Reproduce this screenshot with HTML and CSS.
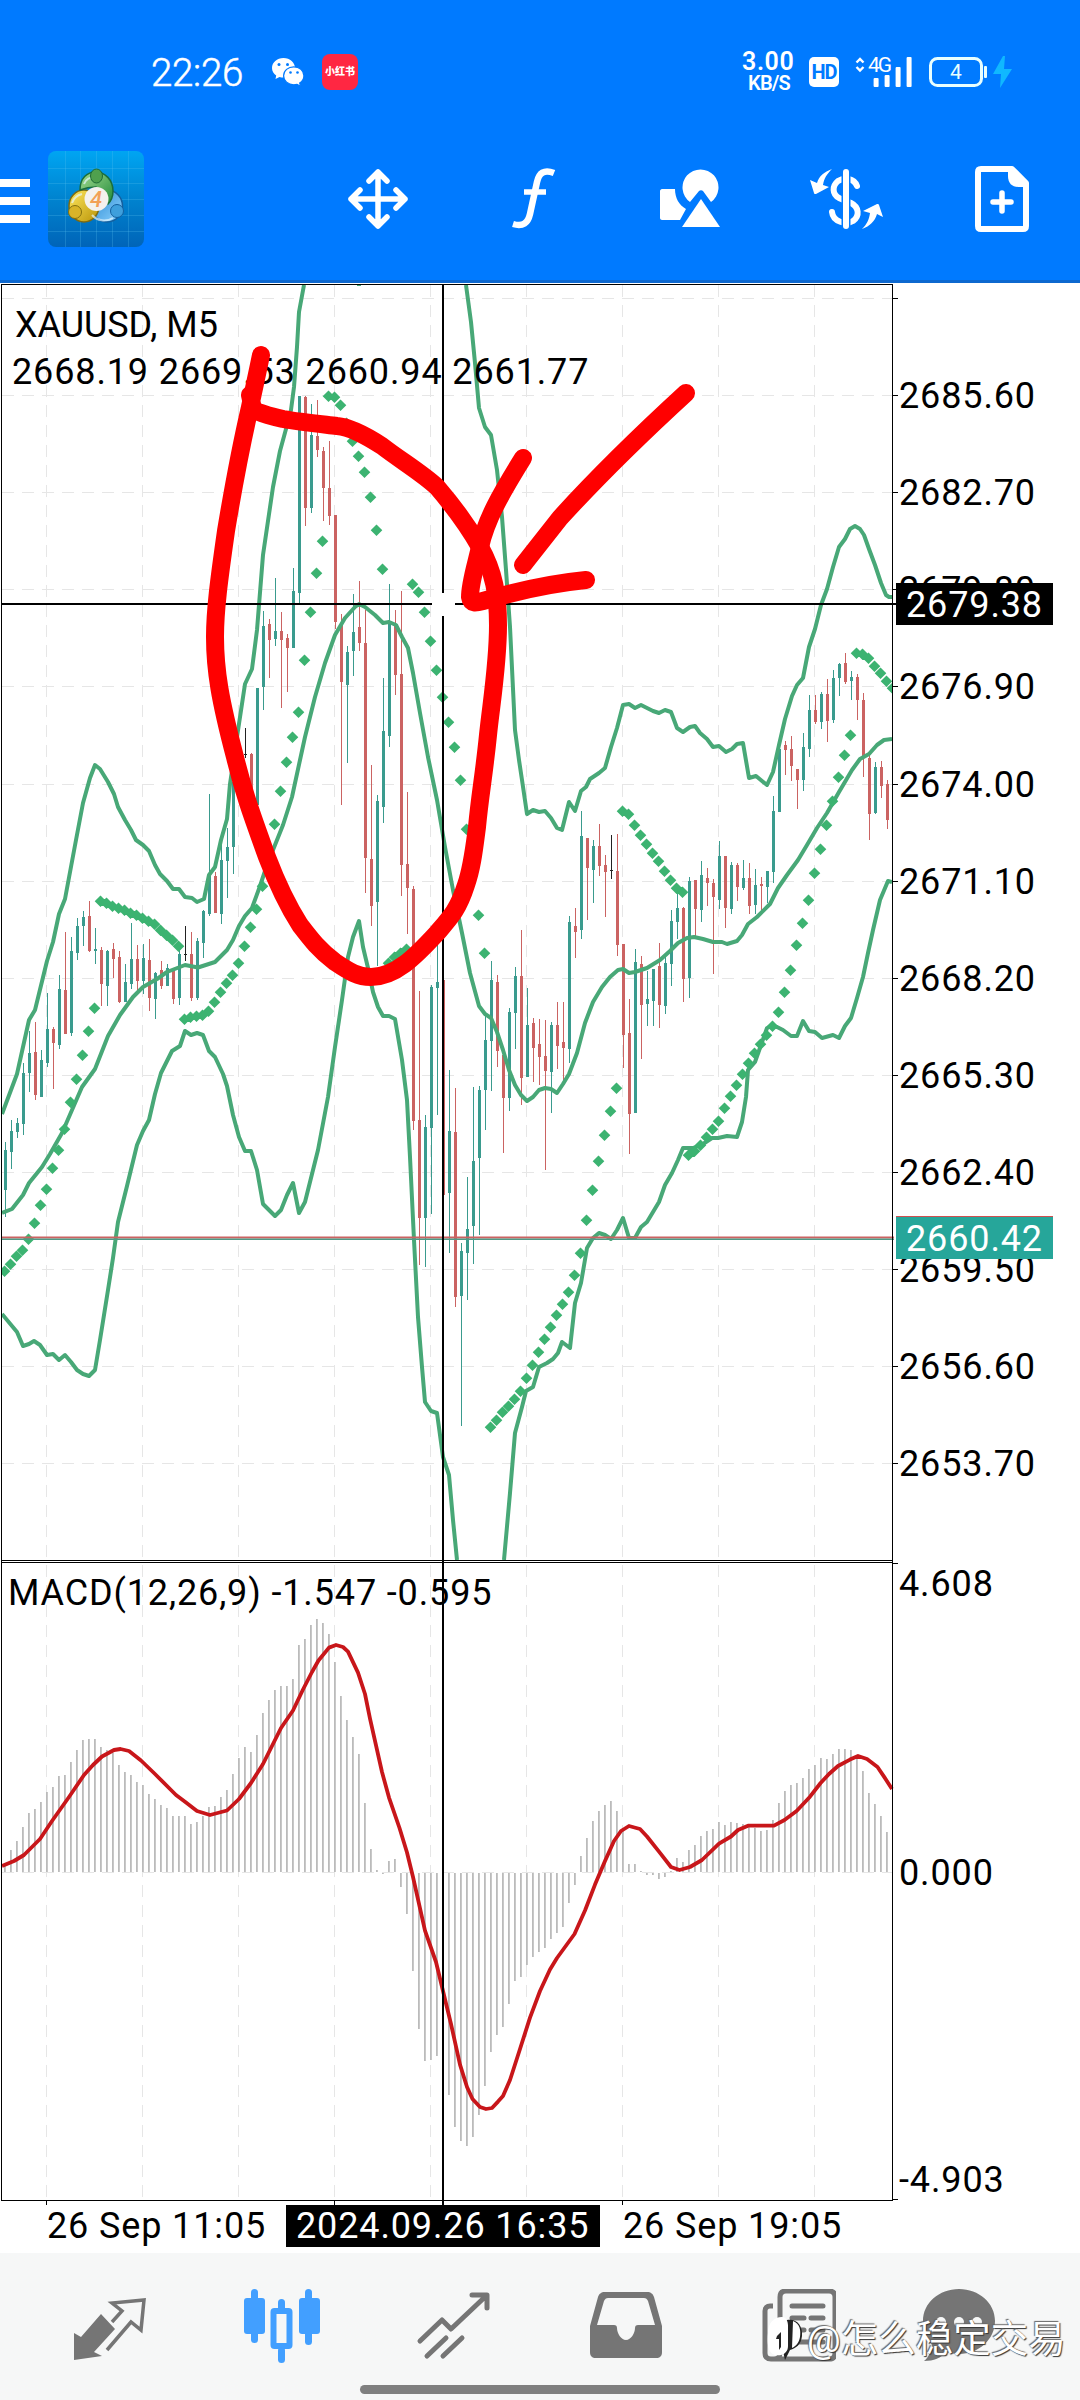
FILE: index.html
```html
<!DOCTYPE html>
<html lang="zh">
    <head>
        <meta http-equiv="content-type" content="text/html;charset=utf-8">
        <title>XAUUSD, M5</title>
        <link rel="stylesheet" href="styles.css">
    </head>
    <body>
        <header class="header">
            <!-- 状态栏 -->
            <div class="status">
                <span class="clock">22:26</span>
                <svg class="wechat" width="32" height="30" viewBox="0 0 32 30">
                    <path fill="#fff" d="M11.500 1C5 1 0 5.500 0 11c0 3.200 1.600 5.800 4.200 7.600L3.500 22l4-2c1.300.3 2.600.6 4 .6C18 20.600 23 16.300 23 11S18 1 11.500 1z"/>
                    <path fill="#fff" stroke="#007aff" stroke-width="1.200" d="M21.800 9.800c-5.700 0-10.200 4-10.200 9s4.500 9 10.200 9c1.100 0 2.300-.2 3.300-.5l3.400 1.900-.8-3.100c2.600-1.700 4.200-4.300 4.200-7.300 0-5-4.500-9-10.100-9z"/>
                    <g fill="#007aff"><circle cx="7" cy="7.500" r="1.500"/><circle cx="15.500" cy="7.500" r="1.500"/><circle cx="18.500" cy="15.500" r="1.300"/><circle cx="25.500" cy="15.500" r="1.300"/></g>
                </svg>
                <span class="red-app">小红书</span>
                <div class="status-right">
                    <div class="speed"><b>3.00</b><i>KB/S</i></div>
                    <span class="hd">HD</span>
                    <svg class="signal" width="58" height="32" viewBox="0 0 58 32">
                        <g fill="none" stroke="#fff" stroke-width="2.400"><path d="M1.500 6.500L5 3l3.500 3.500M1.500 11L5 14.500 8.500 11"/></g>
                        <text x="13" y="16" class="net">4G</text>
                        <g fill="#fff"><rect x="18.600" y="22" width="5" height="9" rx="1"/><rect x="29.600" y="19" width="5" height="12" rx="1"/><rect x="40.600" y="11" width="5" height="20" rx="1"/><rect x="51.600" y="1" width="5" height="30" rx="1"/></g>
                    </svg>
                    <svg class="battery" width="84" height="34" viewBox="0 0 84 34">
                        <rect x="1.500" y="3.500" width="51" height="27" rx="7" fill="none" stroke="#e8ffff" stroke-width="3"/>
                        <rect x="55" y="11" width="3" height="12" rx="1" fill="#e8ffff"/>
                        <text x="21" y="24" class="level">4</text>
                        <path fill="#10b8ff" d="M74 1L64 19h8l-1 14 12-19h-8l1-13z"/>
                    </svg>
                </div>
            </div>
            <!-- 工具栏 -->
            <div class="toolbar">
                <div class="menu"><div></div><div></div><div></div></div>
                <svg class="logo" width="96" height="96" viewBox="0 0 96 96">
                    <defs>
                        <linearGradient id="sky" x1="0" y1="0" x2="0" y2="1"><stop offset="0" stop-color="#00a5f2"/><stop offset=".5" stop-color="#0083cf"/><stop offset="1" stop-color="#0064b8"/></linearGradient>
                        <linearGradient id="green" x1="0" y1="0" x2="1" y2="1"><stop offset="0" stop-color="#a5dc90"/><stop offset="1" stop-color="#1f8a3a"/></linearGradient>
                        <linearGradient id="gold" x1="0" y1="0" x2="1" y2="1"><stop offset="0" stop-color="#ffe75e"/><stop offset="1" stop-color="#b99408"/></linearGradient>
                        <linearGradient id="blue" x1="0" y1="0" x2="1" y2="1"><stop offset="0" stop-color="#2384d0"/><stop offset="1" stop-color="#8fd4ff"/></linearGradient>
                    </defs>
                    <rect width="96" height="96" rx="8" fill="url(#sky)"/>
                    <path stroke="#5cc4ef" stroke-opacity=".25" d="M17.500 0v96M32.500 0v96M48.500 0v96M64.500 0v96M80.500 0v96M0 17.500h96M0 32.500h96M0 48.500h96M0 64.500h96M0 80.500h96"/>
                    <!-- 三个小人 -->
                    <ellipse cx="59" cy="55" rx="15.500" ry="16" fill="url(#blue)" stroke="#145f9e" stroke-width="1.500"/>
                    <ellipse cx="36" cy="55" rx="15" ry="16" fill="url(#gold)" stroke="#7d6b12" stroke-width="1.500"/>
                    <path fill="url(#green)" stroke="#1a6e3c" stroke-width="1.500" d="M32 39c0-12 7-18 16-18s17 8 17 19c0 6-2 10-5 13L48 36c-6 0-11 1-16 3z"/>
                    <path fill="none" stroke="#e4f6ff" stroke-opacity=".7" stroke-width="2" d="M44 64c5 6 14 7 21 3M24 52c2-6 6-8 10-9M36 33c2-5 6-7 11-7"/>
                    <ellipse cx="48.500" cy="25" rx="6" ry="7" fill="#4fa04e" stroke="#1e6b36"/>
                    <circle cx="27" cy="61" r="6.500" fill="#d8b428" stroke="#83700f"/>
                    <circle cx="69" cy="60" r="6.500" fill="#3e9fdc" stroke="#13609f"/>
                    <circle cx="48.500" cy="48" r="12" fill="#f4f1ee"/>
                    <text x="42" y="55.500" class="four">4</text>
                </svg>
                <!-- 十字 -->
                <svg class="tool t-move" width="60" height="60" viewBox="0 0 60 60" fill="none" stroke="#fff" stroke-width="5.500" stroke-linecap="round" stroke-linejoin="round">
                    <path d="M30 3v54M3 30h54M21 12l9-9 9 9M21 48l9 9 9-9M12 21l-9 9 9 9M48 21l9 9-9 9"/>
                </svg>
                <!-- 指标 -->
                <svg class="tool t-func" width="44" height="62" viewBox="0 0 44 62" fill="none" stroke="#fff" stroke-width="6.500">
                    <path d="M42 5C32 1 27 5 25 14L18 46c-2 9-7 13-17 10"/><path stroke-width="5.500" d="M12 24h22"/>
                </svg>
                <!-- 图形 -->
                <svg class="tool t-shape" width="60" height="60" viewBox="0 0 60 60" fill="#fff">
                    <path d="M2 20h13c0 9 4 16 11 20l-6 11H2c-1 0-2-1-2-2V22c0-1 1-2 2-2z"/>
                    <path d="M30 33a18 18 0 1 1 21 0L43 22c-1-1-3-1-4 0z"/>
                    <path d="M41 30l19 28H22z"/>
                </svg>
                <!-- 交易 -->
                <svg class="tool t-trade" width="74" height="62" viewBox="0 0 74 62">
                    <path fill="none" stroke="#fff" stroke-width="6" stroke-linecap="round" d="M47 18c-3-8-13-9-19-5-6 5-6 13 1 17l12 5c8 4 9 13 2 18-7 4-20 1-21-9"/>
                    <path stroke="#007aff" stroke-width="9" d="M36 3v58"/>
                    <path stroke="#fff" stroke-width="6" stroke-linecap="round" d="M36 4v54"/>
                    <path fill="#fff" d="M22 1C14 4 9 8 7 15L0 12l4 13c0 1 1 1 2 1l13-7-6-2c1-7 4-11 9-16zM52 61c8-3 13-8 15-15l6 3-4-12c0-1-1-1-2-1l-14 7 7 2c-1 7-3 11-8 16z"/>
                </svg>
                <!-- 新订单 -->
                <svg class="tool t-order" width="54" height="66" viewBox="0 0 54 66">
                    <path fill="none" stroke="#fff" stroke-width="6" stroke-linejoin="round" d="M6 3h31l14 14v43c0 2-1 3-3 3H6c-2 0-3-1-3-3V6c0-2 1-3 3-3z"/>
                    <path fill="#fff" d="M33 3h6l13 13v5h-9c-6 0-10-4-10-11z"/>
                    <path stroke="#fff" stroke-width="5.500" stroke-linecap="round" d="M27 27v18M18 36h18"/>
                </svg>
            </div>
        </header>

        <!-- 图表，坐标就是屏幕像素 -->
        <svg id="chart" class="chart" width="1080" height="1970" viewBox="0 283 1080 1970"></svg>

        <!-- 底部导航 -->
        <nav class="tabs">
            <svg class="tab" width="76" height="76" viewBox="0 0 76 76" fill="#757575">
                <path d="M2 71V44l7 4 20-23 14 15-21 23 8 4z"/>
                <path fill="none" stroke="#757575" stroke-width="3.500" d="M35 61l24-28 10 8 3-30-32 3 10 8-10 11"/>
            </svg>
            <svg class="tab" width="76" height="76" viewBox="0 0 76 76" fill="#429fff">
                <rect x="0" y="9" width="21" height="36" rx="3"/><rect x="7" y="0" width="7" height="54" rx="3.500"/>
                <rect x="55" y="9" width="21" height="36" rx="3"/><rect x="61" y="0" width="7" height="56" rx="3.500"/>
                <rect x="29.500" y="22" width="16" height="35" rx="1" fill="none" stroke="#429fff" stroke-width="6"/><rect x="34" y="10" width="7" height="12" rx="3.500"/><rect x="34" y="58" width="7" height="16" rx="3.500"/>
            </svg>
            <svg class="tab" width="76" height="76" viewBox="0 0 76 76" fill="none" stroke="#757575" stroke-width="5" stroke-linecap="round" stroke-linejoin="round">
                <path d="M4 52l22-21 9 9L70 7M56 6h15v13M11 67l19-18M27 67l19-18"/>
            </svg>
            <svg class="tab" width="76" height="76" viewBox="0 0 76 76" fill="#757575">
                <path fill-rule="evenodd" d="M17 3h42c4 0 6 2 7 5l8 29v26c0 4-2 6-6 6H8c-4 0-6-2-6-6V37l8-29c1-3 3-5 7-5zM20 9c-2 0-3 1-4 3L9 36h17c2 0 3 1 3 3 0 5 4 12 9 12s9-7 9-12c0-2 1-3 3-3h17l-7-24c-1-2-2-3-4-3z"/>
            </svg>
            <svg class="tab" width="76" height="76" viewBox="0 0 76 76" fill="none" stroke="#757575" stroke-width="5">
                <path d="M13 17h-3c-3 0-5 2-5 5v42c0 4 2 6 6 6h58c4 0 6-2 6-6V8c0-4-2-6-6-6H26c-4 0-6 2-6 6v56c0 4-3 6-6 6"/>
                <path stroke-linecap="round" d="M32 17h31M32 29h12M51 29h12M32 41h12M51 41h12M32 53h31"/>
            </svg>
            <svg class="tab chat" width="76" height="76" viewBox="0 0 76 76">
                <path fill="#757575" d="M38 0c20 0 36 14 36 32S58 65 38 65c-5 0-9-1-13-2-5 6-12 9-22 9 5-4 7-10 8-16C5 50 2 41 2 32 2 14 18 0 38 0z"/>
                <g fill="#f6f7f7"><circle cx="20" cy="33" r="5"/><circle cx="38" cy="33" r="5"/><circle cx="56" cy="33" r="5"/></g>
            </svg>
            <div class="home-bar"></div>
            <div class="mark">
                <svg width="38" height="44" viewBox="0 0 38 44">
                    <path fill="#222" d="M21 3c9-2 16 5 15 16-1 9-6 12-12 14l-5 10-2-9C9 38 4 30 7 17z"/>
                    <path fill="#fff" d="M2 16C2 6 8 0 16 0c4 0 6 4 6 9v20c0 5-3 8-7 9C7 39 0 37 2 16zM27 4c7 3 8 9 7 16-1 6-4 9-8 11z"/>
                    <path fill="#222" d="M11 19l4-4v15l-2 3V22h-3z"/>
                </svg>
                <span>@怎么稳定交易</span>
            </div>
        </nav>
        <script src="chart.js"></script>
    </body>
</html>
```
FILE: styles.css
```css
body {
    margin: 0;
    width: 1080px;
    height: 2400px;
    overflow: hidden;
    background: #fff;
    font-family: Roboto, "Noto Sans CJK SC", sans-serif;
}
/* 顶部 */
.header {
    height: 283px;
    box-sizing: border-box;
    border-bottom: 3px solid #0d68cf;
    background: #007aff;
    color: #fff;
}
.status {
    display: flex;
    align-items: center;
    height: 56px;
    padding: 44px 67px 0 151px;
}
.clock {
    width: 121px;
    font-size: 38.500px;
    font-weight: 300;
    letter-spacing: -0.3px;
    -webkit-text-stroke: 0.5px #fff;
}
.red-app {
    width: 36px;
    height: 36px;
    margin-left: 18px;
    border-radius: 8px;
    background: #ff2742;
    font-size: 10px;
    font-weight: 900;
    line-height: 35px;
    text-align: center;
    white-space: nowrap;
}
.status-right {
    display: flex;
    align-items: center;
    margin-left: auto;
}
.speed {
    width: 67px;
    display: flex;
    flex-direction: column;
}
.speed b {
    font-size: 25px;
    font-weight: 600;
    line-height: 22px;
    letter-spacing: 0.6px;
}
.speed i {
    padding-left: 6px;
    font-size: 20px;
    font-weight: 600;
    font-style: normal;
    line-height: 20px;
    letter-spacing: -0.8px;
}
.hd {
    width: 30px;
    height: 30px;
    border-radius: 5px;
    background: #fff;
    color: #007aff;
    font-size: 20px;
    font-weight: 700;
    line-height: 31px;
    text-align: center;
    letter-spacing: -1px;
}
.signal {
    margin-left: 16px;
}
.battery {
    margin-left: 16px;
}
.net {
    fill: #fff;
    font-size: 21px;
    letter-spacing: -2px;
}
.level {
    fill: #e8ffff;
    font-size: 21px;
}
/* 工具栏 */
.toolbar {
    display: flex;
    align-items: center;
    height: 98px;
    margin-top: 50px;
}
.menu {
    width: 30px;
    display: flex;
    flex-direction: column;
    gap: 10px;
    margin-top: 4px;
}
.menu div {
    height: 8px;
    background: #fff;
}
.logo {
    margin-left: 18px;
}
.four {
    fill: #f2a056;
    font-size: 22px;
    font-style: italic;
    font-weight: 500;
}
.t-move {
    margin-left: 204px;
}
.t-func {
    margin-left: 104px;
}
.t-shape {
    margin-left: 104px;
}
.t-trade {
    margin-left: 90px;
}
.t-order {
    margin-left: 91px;
}
/* 图表 */
.chart {
    display: block;
    background: #fff;
}
.label {
    font-size: 36px;
    letter-spacing: 0.87px;
    fill: #000;
}
.label.light {
    fill: #fff;
}
.label.tight {
    letter-spacing: -0.05px;
}
/* 底部 */
.tabs {
    position: relative;
    display: flex;
    gap: 96px;
    height: 147px;
    padding: 36px 0 0 72px;
    box-sizing: border-box;
    background: #f6f7f7;
}
.tab {
    flex: none;
}
.chat {
    margin-left: -11px;
}
.home-bar {
    position: absolute;
    left: 360px;
    top: 132px;
    width: 360px;
    height: 9px;
    border-radius: 5px;
    background: #7f7f7f;
}
/* 水印 */
.mark {
    position: absolute;
    left: 766px;
    top: 64px;
    display: flex;
    align-items: center;
    color: #fff;
    font-size: 37.500px;
    line-height: 44px;
    white-space: nowrap;
    text-shadow: -1px -1px 1px #666, 1px 1px 1px #333;
}
.mark span {
    margin-left: 3px;
}
```
FILE: chart.js
```js
var RIGHT = 892;
var svg = document.getElementById("chart");
var out = "";

function add(s) {
    out += s;
}
function rect(x, y, w, h, color) {
    add('<rect x="' + x + '" y="' + y + '" width="' + w + '" height="' + h + '" fill="' + color + '"/>');
}
function line(points, color, width) {
    add('<polyline points="' + points + '" fill="none" stroke="' + color + '" stroke-width="' + width + '" stroke-linejoin="round"/>');
}
function text(x, y, s, cls) {
    add('<text x="' + x + '" y="' + y + '" class="label ' + (cls || "") + '">' + s + '</text>');
}

// 每根K线: 最高, 实体上, 实体下, 最低, 颜色
var candles = [
    "1142,1150,1190,1217,G", "1120,1131,1152,1169,G", "1118,1123,1132,1138,G", "1063,1073,1124,1135,G", "1031,1053,1073,1092,G",
    "1022,1052,1095,1100,R", "1050,1060,1097,1097,G", "993,1029,1063,1067,G", "1027,1029,1043,1089,R", "975,989,1045,1049,G",
    "932,990,1034,1034,R", "937,951,1033,1036,G", "918,926,953,960,G", "911,917,926,946,G", "901,916,951,952,R",
    "928,949,951,964,G", "947,950,984,1006,R", "950,951,986,1006,G", "943,949,959,978,R", "951,957,1002,1003,R",
    "964,982,1002,1002,G", "923,959,984,989,G", "945,959,981,994,R", "944,958,981,994,G", "939,960,998,1011,R",
    "972,973,999,1019,G", "961,970,986,989,R", "964,968,986,986,G", "969,971,999,1004,R", "950,954,998,1005,G",
    "926,954,955,961,K", "932,954,998,1001,R", "938,941,998,1000,G", "910,911,943,958,G", "794,876,914,916,G",
    "872,876,913,913,R", "845,860,914,924,G", "828,847,861,898,G", "780,782,847,874,G", "755,757,783,790,G",
    "728,754,755,758,K", "753,754,790,790,R", "688,688,805,805,G", "611,626,687,710,G", "619,624,640,678,R",
    "578,631,639,646,G", "612,631,640,708,R", "634,638,648,692,R", "568,591,648,648,G", "396,396,593,603,G",
    "396,397,508,526,R", "404,435,508,513,G", "400,436,450,457,R", "447,451,488,521,R", "441,488,516,525,R",
    "515,515,622,629,R", "614,623,682,805,R", "646,652,685,763,G", "594,632,651,676,G", "581,627,643,651,R",
    "610,643,858,893,R", "765,859,906,926,R", "795,801,902,966,G", "678,731,807,823,G", "584,623,736,747,G",
    "610,624,675,695,R", "591,674,865,896,R", "792,864,888,934,R", "886,889,1121,1130,R", "991,1120,1218,1265,R",
    "1115,1127,1218,1267,G", "985,987,1128,1214,G", "945,982,988,1115,G", "978,980,1195,1195,R", "1070,1131,1193,1253,G",
    "1088,1132,1297,1307,R", "1243,1251,1296,1426,G", "1177,1229,1253,1300,G", "1087,1161,1226,1264,G", "1086,1090,1158,1235,G",
    "1015,1040,1090,1130,G", "961,980,1041,1091,G", "975,982,1051,1067,R", "1052,1055,1098,1153,R", "1008,1012,1098,1111,G",
    "967,976,1013,1049,G", "930,976,1078,1105,R", "988,1025,1077,1077,G", "1018,1023,1048,1082,R", "1019,1044,1057,1085,R",
    "1020,1056,1071,1170,R", "1022,1025,1072,1113,G", "1002,1025,1046,1069,R", "1002,1042,1048,1080,R", "916,922,1049,1063,G",
    "908,926,932,958,R", "811,836,930,939,G", "838,838,868,920,R", "840,846,870,903,G", "824,846,866,876,R",
    "855,865,872,917,R", "835,870,871,879,K", "834,871,945,956,R", "944,944,1035,1068,R", "999,1033,1114,1154,R",
    "949,962,1113,1113,G", "956,964,1005,1059,R", "971,999,1004,1026,G", "969,969,1001,1026,G", "943,966,1005,1028,R",
    "957,963,1006,1014,G", "910,921,964,986,G", "893,908,922,939,G", "907,908,979,1002,R", "877,881,978,998,G",
    "880,880,909,937,R", "861,875,910,922,G", "868,878,883,906,R", "879,883,897,974,R", "841,856,900,909,G",
    "856,856,908,928,R", "862,865,909,914,G", "863,865,887,901,R", "860,878,888,890,G", "863,878,906,914,R",
    "869,885,905,914,G", "877,884,886,910,R", "871,871,887,903,G", "796,811,872,883,G", "748,749,812,812,G",
    "741,745,750,775,R", "736,749,766,781,R", "769,769,780,809,R", "733,747,780,791,G", "695,710,749,757,G",
    "695,710,722,724,R", "692,694,722,729,G", "679,694,721,742,R", "670,678,720,723,G", "663,664,678,696,G",
    "653,663,682,684,R", "671,677,681,700,G", "674,677,700,720,R", "693,700,757,777,R", "753,758,814,840,R",
    "762,767,813,814,G", "761,767,786,798,R", "780,784,820,829,R"
];

// 抛物线 SAR
var sar = [
    1271, 1264, 1256, 1250, 1239, 1223, 1205, 1189, 1168, 1150, 1129, 1102, 1079, 1055, 1031, 1008,
    901, 903, 906, 908, 910, 913, 915, 918, 921, 924, 930, 935, 940, 946,
    1019, 1017, 1016, 1015, 1011, 1002, 992, 983, 975, 963, 946, 927, 909, 886, 860, 824, 791, 762, 737, 712, 660, 612, 573, 541,
    396, 397, 405, 423, 441, 456, 472, 497, 530, 569,
    963, 957, 953, 949,
    584, 592, 612, 641, 670, 697, 722, 747, 780, 829, 872, 915, 953,
    1427, 1420, 1412, 1406, 1399, 1391, 1378, 1365, 1352, 1339, 1327, 1315, 1304, 1292, 1275, 1253, 1220, 1190, 1161, 1135, 1111, 1088,
    811, 814, 825, 835, 844, 853, 861, 871, 880, 888, 892,
    1155, 1151, 1145, 1137, 1129, 1121, 1108, 1096, 1085, 1074, 1063, 1053, 1044, 1035, 1026, 1012, 992, 970, 945, 923, 900, 873, 849, 825, 801, 777, 755, 735,
    653, 654, 658, 666, 673, 681, 688
];

// 布林带
var upper1 = "2,1114 17,1074 29,1020 35,1010 47,961 53,942 59,914 65,899 76,840 83,803 90,778 95,765 100,769 108,782 114,794 118,807 125,820 131,830 136,840 143,845 149,851 155,865 160,874 167,881 173,889 179,889 185,897 192,898 197,902 204,899 209,875 215,867 221,840 227,819 230,784 237,737 245,684 252,669 257,630 263,555 273,487 280,451 286,429 291,410 294,387 297,347 299,312 304,285";
var upper2 = "466,285 471,322 475,363 479,408 485,427 491,435 497,470 502,517 506,570 510,627 515,730 519,760 522,780 527,814 533,810 539,812 545,811 551,818 557,828 562,830 569,802 575,811 581,791 586,787 590,779 599,773 605,768 611,747 617,728 623,705 629,704 635,708 641,705 647,708 653,711 659,713 665,710 671,712 677,728 683,732 690,727 695,726 700,733 707,739 713,747 719,746 726,752 732,749 737,744 743,743 749,778 756,776 762,781 767,785 773,772 779,745 785,719 792,696 797,685 803,678 809,647 815,629 821,605 827,589 833,567 839,547 845,539 850,529 855,526 860,529 864,535 869,549 875,565 881,583 886,595 889,597 892,597";
var middle = "2,1213 12,1209 23,1195 29,1183 42,1167 50,1154 62,1133 72,1110 82,1087 95,1069 108,1036 120,1015 133,997 143,987 157,979 167,972 185,965 198,967.5 215,962 227,950 233,940 239,926 245,916 252,908 260,886 267,865 275,845 283,825 292,797 300,760 305,737 315,697 325,663 335,635 345,618 355,607 359,604 365,607 375,615 383,623 389,622 396,625 402,637 408,648 413,673 420,713 428,757 437,800 445,847 453,890 462,933 470,973 479,1006 485,1014 491,1018 497,1032 503,1050 509,1070 515,1085 521,1095 527,1101 533,1097 539,1090 545,1088 551,1089 557,1093 563,1084 569,1074 577,1053 585,1023 593,1002 602,987 610,977 618,970 623,969 629,973 635,972 647,968 660,960 670,951 678,943 687,938 694,937 703,939 713,942 722,942 727,944 737,941 742,935 748,924 757,917 770,904 778,888 787,875 798,860 807,845 817,828 827,813 839,792 852,770 860,759 869,754 877,745 884,740 892,739";
var lower1 = "2,1314 17,1332 23,1346 29,1344 34,1341 40,1345 47,1355 53,1354 59,1360 65,1355 71,1362 77,1370 83,1374 89,1376 95,1370 100,1340 108,1290 113,1258 118,1222 127,1186 137,1145 143,1131 149,1120 155,1094 161,1073 167,1061 172,1051 180,1046 185,1031 191,1035 197,1033 203,1035 209,1051 215,1057 223,1074 227,1086 233,1115 239,1137 245,1151 251,1151 257,1170 263,1204 275,1216 281,1210 287,1195 293,1183 299,1213 305,1202 318,1150 328,1097 335,1047 342,1000 348,957 353,937 359,921 363,947 368,968 373,992 378,1007 383,1016 389,1016 395,1019 402,1060 407,1100 410,1157 414,1240 418,1317 422,1367 425,1402 431,1411 437,1413 443,1457 449,1475 453,1520 457,1560";
var lower2 = "504,1560 510,1493 515,1433 522,1407 526,1391 533,1387 539,1367 547,1363 553,1359 558,1353 562,1342 570,1348 575,1303 581,1283 587,1248 593,1238 599,1233 605,1235 611,1239 617,1230 623,1218 629,1238 635,1238 641,1227 647,1222 659,1202 665,1185 672,1173 678,1160 683,1148 693,1148 703,1144 712,1138 718,1138 727,1136 737,1137 742,1122 746,1097 748,1070 755,1062 767,1028 772,1026 777,1027 783,1030 791,1036 797,1036 803,1021 809,1031 815,1032 822,1038 833,1035 839,1038 845,1026 851,1018 857,998 863,977 868,953 873,930 880,900 888,881 892,882";

// MACD 柱和信号线
var macd = [
    6, 22, 31, 45, 59, 63, 70, 80, 85, 96, 97, 110, 122, 132, 133, 133, 125, 122, 119, 107, 100, 97, 90, 87, 78, 73, 67, 64, 56, 56,
    56, 48, 50, 56, 65, 66, 75, 82, 98, 114, 125, 120, 137, 159, 172, 182, 186, 186, 193, 227, 233, 247, 253, 249, 238, 210, 176, 152, 135, 118,
    69, 23, 2, -1, 11, 13, -14, -41, -98, -156, -188, -187, -183, -204, -222, -254, -268, -273, -264, -242, -213, -179, -162, -154, -131, -108, -104, -92, -84, -79,
    -75, -66, -60, -54, -30, -12, 16, 34, 51, 61, 67, 71, 61, 44, 8, 8, 1, -2, -2, -6, -4, 1, 14, 10, 22, 27, 36, 41, 43, 50,
    47, 50, 49, 48, 47, 44, 41, 42, 52, 69, 81, 87, 89, 94, 103, 107, 114, 113, 118, 123, 123, 122, 114, 101, 79, 68, 56, 40
];
var signal = "2,1866 14,1861 24,1855 40,1839 52,1821 69,1797 84,1775 93,1765 102,1756.5 114,1750 120.5,1749 129,1751 141,1760.5 155,1774 176,1795 186,1802.5 197,1811 210,1815 227,1810.5 239,1799 251,1783 263,1764 272,1746 281,1728 293,1710.5 303,1689.5 312,1672 318.5,1660.5 329,1647.6 336,1645 343,1647 348,1651.6 358,1672.6 365,1694 370,1718.6 382,1772 389,1797.6 399.5,1828 407,1852.5 413,1877 425,1930.6 436,1962 443,1991 451,2024 460,2064.6 467,2087 472.5,2099 480,2107 486,2109 492,2108 498,2101.6 503,2096 510,2080 520,2049 530,2017.7 540,1991 550,1969.5 557,1958 574.5,1934 585,1910.5 595,1884.6 605,1861 614,1841 621,1831 629,1826 640,1829 647,1836.5 659,1851.6 671,1867 679.5,1870 690,1867 702,1860 719,1843.6 731,1836.5 738,1830 748,1825.7 774,1825.7 784.5,1820 796.6,1811 810,1796.7 820.6,1783 829,1774 838,1766 850,1759.6 858,1756 867,1759 877.5,1767 884,1776.6 892,1789";

var colors = { G: "#3a9b8e", R: "#cb6362", K: "#222" };
var gridY = [298, 395, 492, 589, 686, 784, 881, 978, 1075, 1172, 1269, 1366, 1463];
var prices = ["", "2685.60", "2682.70", "2679.80", "2676.90", "2674.00", "2671.10", "2668.20", "2665.30", "2662.40", "2659.50", "2656.60", "2653.70"];
var i;

add('<clipPath id="plot"><rect x="2" y="285" width="890" height="1275"/></clipPath>');

// 网格
var grid = "";
for (i = 0; i < 9; i++) {
    grid += "M" + (46.5 + i * 96) + " 285V2200";
}
for (i = 0; i < gridY.length; i++) {
    grid += "M2 " + (gridY[i] + 0.5) + "H" + RIGHT;
}
grid += "M2 1872.5H" + RIGHT;
add('<path d="' + grid + '" fill="none" stroke="#e6e6e6" stroke-dasharray="12 8"/>');

// K线
for (i = 0; i < candles.length; i++) {
    var c = candles[i].split(",");
    var x = 4 + i * 6;
    rect(x + 1, c[0], 1, c[3] - c[0], colors[c[4]]);
    rect(x, c[1], 3, Math.max(c[2] - c[1], 1), colors[c[4]]);
}

// 指标
add('<g clip-path="url(#plot)">');
[upper1, upper2, middle, lower1, lower2].forEach(function (b) {
    line(b, "#48a877", 4);
});
rect(357, 285, 4, 1, "#48a877");
var dots = "";
for (i = 0; i < sar.length; i++) {
    dots += "M" + (4.5 + i * 6) + " " + (sar[i] - 5.5) + "l5.800 5.800l-5.800 5.800l-5.800 -5.800z";
}
add('<path d="' + dots + '" fill="#3cb371"/></g>');

// 现价线
rect(2, 1236.5, 892, 2, "#cb6362");
rect(2, 1238.5, 892, 1.5, "#4f9a86");

// MACD
for (i = 0; i < macd.length; i++) {
    rect(4 + i * 6, macd[i] > 0 ? 1872 - macd[i] : 1873, 1.8, Math.abs(macd[i]), "#bbb");
}
line(signal, "#c8161a", 3.8);

// 文字
text(15, 337, "XAUUSD, M5", "tight");
text(12, 383.5, "2668.19 2669.53 2660.94 2661.77");
text(8, 1605, "MACD(12,26,9) -1.547 -0.595");
for (i = 0; i < gridY.length; i++) {
    rect(RIGHT, gridY[i], 6, 1, "#000");
    text(899, gridY[i] + 13, prices[i]);
}
text(899, 1596, "4.608");
text(899, 1885, "0.000");
text(899, 2192, "-4.903");
text(47, 2238, "26 Sep 11:05");
text(623, 2238, "26 Sep 19:05");
rect(286, 2205, 314, 42, "#000");
text(296, 2238, "2024.09.26 16:35", "light");

// 边框和刻度
rect(1, 284, 1, 1916, "#000");
rect(RIGHT, 284, 1, 1917, "#000");
rect(1, 284, 892, 1, "#000");
rect(1, 1560, 892, 1, "#000");
rect(1, 1562, 892, 1, "#000");
rect(1, 2200, 892, 1, "#000");
rect(RIGHT, 1563, 6, 1, "#000");
rect(RIGHT, 2199, 6, 1, "#000");
rect(46, 2200, 1, 5, "#000");
rect(334, 2200, 1, 5, "#000");
rect(622, 2200, 1, 5, "#000");

// 十字光标
rect(2, 603, 430, 2, "#000");
rect(455, 603, 441, 2, "#000");
rect(442, 285, 2, 308, "#000");
rect(442, 616, 2, 1589, "#000");
rect(896, 583, 157, 42, "#000");
text(906, 616.5, "2679.38", "light");
rect(896, 1216, 157, 43, "#26a69a");
rect(896, 1216, 157, 1, "#d05050");
text(906, 1250.5, "2660.42", "light");

// 手绘标记
add('<g fill="none" stroke="#f00" stroke-width="18" stroke-linecap="round" stroke-linejoin="round">');
add('<path d="M261 355C258 370 254 388 250 407C240 450 232 495 226 531C219 580 215 610 215 637C215 670 220 700 235 757C243 790 250 810 267 857C275 878 284 900 300 925C310 938 318 949 335 962C350 972 358 977 371 977C395 977 415 957 437 933C450 918 458 910 466 885C472 868 474 850 477 827C480 795 484 775 488 735C491 705 498 665 498 625C498 595 494 572 480 547C472 533 455 508 437 487C422 473 400 460 382 446C365 435 350 427 337 426C320 424 300 422 283 419C270 416 258 413 253 409L250 395"/>');
add('<path d="M523 458C500 495 486 520 480 547C476 565 470 583 470 597C471 604 476 603 483 601C510 593 545 584 586 580"/>');
add('<path d="M686 393C650 426 600 474 560 518L523 565"/></g>');

svg.innerHTML = out;
```
